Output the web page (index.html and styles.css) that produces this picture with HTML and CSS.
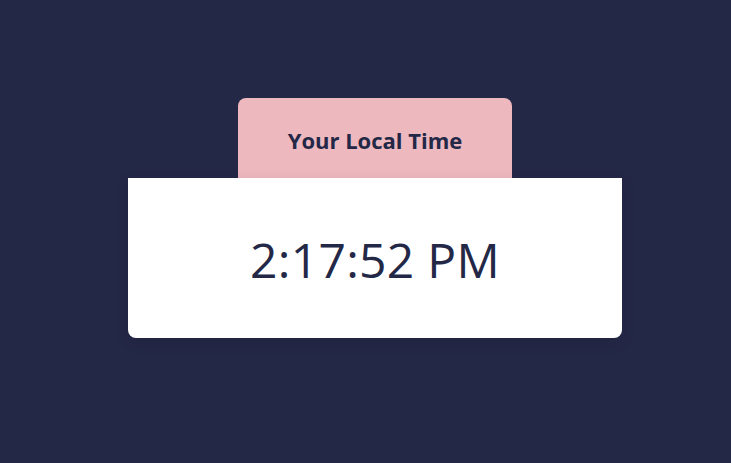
FILE: index.html
```html
<!DOCTYPE html>
<html lang="en">
<head>
<meta charset="utf-8">
<title>Your Local Time</title>
<link rel="stylesheet" href="styles.css">
</head>
<body>
<main class="clock">
  <div class="clock-tab">
    <h1 class="clock-title">Your Local Time</h1>
  </div>
  <div class="clock-card">
    <p class="clock-time">2:17:52 PM</p>
  </div>
</main>
</body>
</html>
```
FILE: styles.css
```css
html, body {
  margin: 0;
  padding: 0;
}
body {
  background: #242847;
  font-family: "Open Sans", "Noto Sans", sans-serif;
  color: #242847;
  min-height: 463px;
}
.clock {
  width: 494px;
  margin: 98px 0 0 128px;
  display: flex;
  flex-direction: column;
  align-items: center;
}
.clock-tab {
  width: 274px;
  height: 80px;
  background: #eeb8bf;
  border-radius: 8px 8px 0 0;
  display: flex;
  align-items: center;
  justify-content: center;
}
.clock-title {
  margin: 4px 0 0;
  font-size: 22px;
  font-weight: 700;
  line-height: 1;
}
.clock-card {
  align-self: stretch;
  height: 160px;
  background: #ffffff;
  border-radius: 0 0 8px 8px;
  box-shadow: 0 4px 14px rgba(0, 0, 0, 0.12);
  display: flex;
  align-items: center;
  justify-content: center;
}
.clock-time {
  margin: 4px 0 0;
  font-size: 48px;
  font-weight: 400;
  line-height: 1;
  letter-spacing: 0.3px;
}
```
